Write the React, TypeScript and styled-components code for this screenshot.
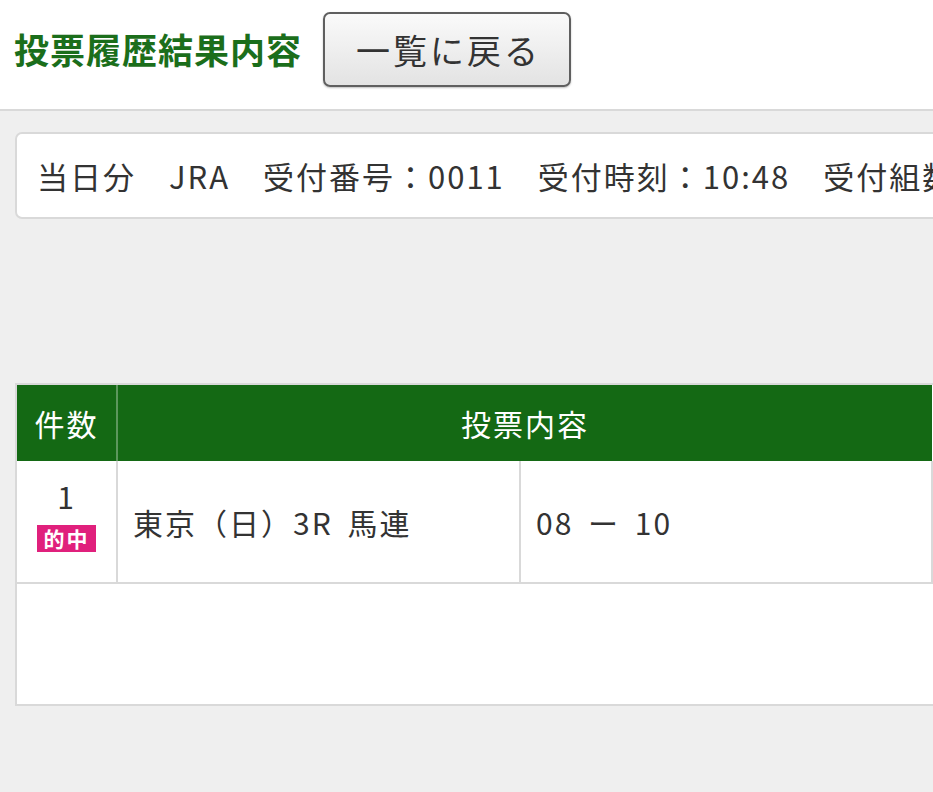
import React from "react";
import styled, { createGlobalStyle } from "styled-components";

const Global = createGlobalStyle`
  html, body {
    margin: 0;
    padding: 0;
    background: #efefef;
    overflow: hidden;
  }
  body {
    width: 933px;
    height: 792px;
    font-family: "Noto Sans CJK JP", "Noto Sans", sans-serif;
    color: #333;
  }
`;

const Header = styled.header`
  background: #fff;
  border-bottom: 2px solid #d9d9d9;
  display: flex;
  align-items: center;
  padding-left: 14px;
  gap: 21px;
  box-sizing: border-box;
  height: 111px;
`;

const Title = styled.h1`
  margin: -13px 0 0 0;
  font-size: 35px;
  font-weight: 700;
  color: #1b6e1b;
  letter-spacing: 1px;
  line-height: 1;
`;

const BackButton = styled.button`
  width: 248px;
  height: 75px;
  margin-top: -10px;
  border: 2px solid #5f5f5f;
  border-radius: 7px;
  background: linear-gradient(#fafafa, #e3e3e3);
  box-shadow: 0 1px 2px rgba(0, 0, 0, 0.25);
  font-family: "Noto Sans CJK JP", sans-serif;
  font-size: 34px;
  letter-spacing: 3px;
  color: #333;
  padding: 0 0 0 3px;
  line-height: 1;
  cursor: pointer;
`;

const Main = styled.main`
  padding: 21px 0 0 15px;
`;

const InfoCard = styled.div`
  width: 1000px;
  height: 87px;
  box-sizing: border-box;
  background: #fff;
  border: 2px solid #d9d9d9;
  border-radius: 7px;
  display: flex;
  align-items: center;
  padding-left: 20px;
  white-space: nowrap;
  font-size: 31px;
  letter-spacing: 2px;
  color: #333;
`;

const InfoItem = styled.span`
  margin-right: 33px;
`;

const Panel = styled.section`
  margin-top: 164px;
  width: 1000px;
  height: 323px;
  box-sizing: border-box;
  background: #fff;
  border-left: 2px solid #d9d9d9;
  border-bottom: 2px solid #d9d9d9;
  border-top: 2px solid #d9d9d9;
`;

const Table = styled.table`
  width: 916px;
  border-collapse: collapse;
  table-layout: fixed;
`;

const HeadCell = styled.th`
  background: #146914;
  color: #fff;
  font-weight: 400;
  font-size: 30px;
  letter-spacing: 2px;
  height: 76px;
  padding: 0;
  text-align: center;
  border-left: 2px solid #5c975c;
  &:first-child {
    border-left: none;
  }
`;

const Cell = styled.td<{ $center?: boolean }>`
  height: 121px;
  padding: 0 0 0 ${(p) => (p.$center ? 0 : 15)}px;
  border: 2px solid #d9d9d9;
  border-top: none;
  font-size: 30px;
  letter-spacing: 2px;
  word-spacing: 6px;
  color: #333;
  text-align: ${(p) => (p.$center ? "center" : "left")};
  vertical-align: middle;
  white-space: nowrap;
  &:first-child {
    border-left: none;
  }
`;

const Count = styled.div`
  font-size: 30px;
  line-height: 1;
  margin-top: -6px;
`;

const HitBadge = styled.span`
  display: inline-block;
  margin-top: 14px;
  width: 59px;
  height: 27px;
  background: #e0207c;
  color: #fff;
  font-weight: 700;
  font-size: 21px;
  line-height: 27px;
  letter-spacing: 2px;
  text-align: center;
`;

export default function App() {
  return (
    <>
      <Global />
      <Header>
        <Title>投票履歴結果内容</Title>
        <BackButton>一覧に戻る</BackButton>
      </Header>
      <Main>
        <InfoCard>
          <InfoItem>当日分</InfoItem>
          <InfoItem>JRA</InfoItem>
          <InfoItem>受付番号：0011</InfoItem>
          <InfoItem>受付時刻：10:48</InfoItem>
          <InfoItem>受付組数：1</InfoItem>
        </InfoCard>
        <Panel>
          <Table>
            <colgroup>
              <col style={{ width: 100 }} />
              <col style={{ width: 403 }} />
              <col />
            </colgroup>
            <thead>
              <tr>
                <HeadCell>件数</HeadCell>
                <HeadCell colSpan={2}>投票内容</HeadCell>
              </tr>
            </thead>
            <tbody>
              <tr>
                <Cell $center>
                  <Count>1</Count>
                  <HitBadge>的中</HitBadge>
                </Cell>
                <Cell>東京（日）3R 馬連</Cell>
                <Cell>08 ー 10</Cell>
              </tr>
            </tbody>
          </Table>
        </Panel>
      </Main>
    </>
  );
}
